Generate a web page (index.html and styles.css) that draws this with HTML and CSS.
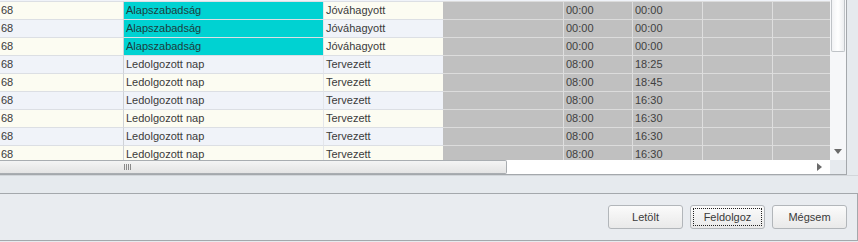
FILE: index.html
```html
<!DOCTYPE html>
<html lang="hu">
<head>
  <meta charset="UTF-8" />
  <title>Jelenlét feldolgozás</title>
  <link rel="stylesheet" href="styles.css">
</head>
<body>
  <div class="racs-doboz">
    <div class="racs-fo">
      <div class="sorok">
        <div class="sor paratlan">
          <div class="cella c1">68</div>
          <div class="cella c2 turkiz">Alapszabadság</div>
          <div class="cella c3">Jóváhagyott</div>
          <div class="cella c4 szurke"></div>
          <div class="cella c5 szurke">00:00</div>
          <div class="cella c6 szurke">00:00</div>
          <div class="cella c7 szurke"></div>
          <div class="cella c8 szurke"></div>
        </div>
        <div class="sor paros">
          <div class="cella c1">68</div>
          <div class="cella c2 turkiz">Alapszabadság</div>
          <div class="cella c3">Jóváhagyott</div>
          <div class="cella c4 szurke"></div>
          <div class="cella c5 szurke">00:00</div>
          <div class="cella c6 szurke">00:00</div>
          <div class="cella c7 szurke"></div>
          <div class="cella c8 szurke"></div>
        </div>
        <div class="sor paratlan">
          <div class="cella c1">68</div>
          <div class="cella c2 turkiz">Alapszabadság</div>
          <div class="cella c3">Jóváhagyott</div>
          <div class="cella c4 szurke"></div>
          <div class="cella c5 szurke">00:00</div>
          <div class="cella c6 szurke">00:00</div>
          <div class="cella c7 szurke"></div>
          <div class="cella c8 szurke"></div>
        </div>
        <div class="sor paros">
          <div class="cella c1">68</div>
          <div class="cella c2">Ledolgozott nap</div>
          <div class="cella c3">Tervezett</div>
          <div class="cella c4 szurke"></div>
          <div class="cella c5 szurke">08:00</div>
          <div class="cella c6 szurke">18:25</div>
          <div class="cella c7 szurke"></div>
          <div class="cella c8 szurke"></div>
        </div>
        <div class="sor paratlan">
          <div class="cella c1">68</div>
          <div class="cella c2">Ledolgozott nap</div>
          <div class="cella c3">Tervezett</div>
          <div class="cella c4 szurke"></div>
          <div class="cella c5 szurke">08:00</div>
          <div class="cella c6 szurke">18:45</div>
          <div class="cella c7 szurke"></div>
          <div class="cella c8 szurke"></div>
        </div>
        <div class="sor paros">
          <div class="cella c1">68</div>
          <div class="cella c2">Ledolgozott nap</div>
          <div class="cella c3">Tervezett</div>
          <div class="cella c4 szurke"></div>
          <div class="cella c5 szurke">08:00</div>
          <div class="cella c6 szurke">16:30</div>
          <div class="cella c7 szurke"></div>
          <div class="cella c8 szurke"></div>
        </div>
        <div class="sor paratlan">
          <div class="cella c1">68</div>
          <div class="cella c2">Ledolgozott nap</div>
          <div class="cella c3">Tervezett</div>
          <div class="cella c4 szurke"></div>
          <div class="cella c5 szurke">08:00</div>
          <div class="cella c6 szurke">16:30</div>
          <div class="cella c7 szurke"></div>
          <div class="cella c8 szurke"></div>
        </div>
        <div class="sor paros">
          <div class="cella c1">68</div>
          <div class="cella c2">Ledolgozott nap</div>
          <div class="cella c3">Tervezett</div>
          <div class="cella c4 szurke"></div>
          <div class="cella c5 szurke">08:00</div>
          <div class="cella c6 szurke">16:30</div>
          <div class="cella c7 szurke"></div>
          <div class="cella c8 szurke"></div>
        </div>
        <div class="sor paratlan">
          <div class="cella c1">68</div>
          <div class="cella c2">Ledolgozott nap</div>
          <div class="cella c3">Tervezett</div>
          <div class="cella c4 szurke"></div>
          <div class="cella c5 szurke">08:00</div>
          <div class="cella c6 szurke">16:30</div>
          <div class="cella c7 szurke"></div>
          <div class="cella c8 szurke"></div>
        </div>
      </div>

      <div class="vizszintes-gorgeto">
        <div class="csuszka-v">
          <span class="fogo"></span>
        </div>
        <div class="sav-v">
          <svg width="5" height="8" viewBox="0 0 5 8"><path d="M0 0 L5 4 L0 8 Z" fill="#6a6a6a"/></svg>
        </div>
      </div>
    </div>

    <div class="fuggoleges-gorgeto">
      <div class="sav-f">
        <div class="csuszka-f"></div>
        <svg class="nyil-le" width="8" height="5" viewBox="0 0 8 5"><path d="M0 0 L8 0 L4 5 Z" fill="#6a6a6a"/></svg>
      </div>
      <div class="sarok"></div>
    </div>
  </div>

  <div class="resz"></div>

  <div class="gomb-panel">
    <button class="gomb">Letölt</button>
    <button class="gomb aktiv"><span>Feldolgoz</span></button>
    <button class="gomb">Mégsem</button>
  </div>
</body>
</html>
```

FILE: styles.css
```css
body {
  font-family: "Liberation Sans", Arial, sans-serif;
  font-size: 11px;
  color: #3a3a3a;
  background-color: #e6eaee;
  margin: 0;
  padding: 0;
  width: 858px;
  height: 242px;
  overflow: hidden;
}

.racs-doboz {
  display: flex;
  width: 847px;
  height: 175px;
  box-sizing: border-box;
  border-right: 1px solid #a4a8ac;
  border-bottom: 1px solid #a4a8ac;
  background-color: #fff;
}

.racs-fo {
  width: 830px;
  display: flex;
  flex-direction: column;
}

.sorok {
  height: 160px;
  overflow: hidden;
  padding-top: 1px;
  box-sizing: border-box;
  background-color: #f0f3f9;
}

.sor {
  display: grid;
  grid-template-columns: 123px 200px 120px 120px 69px 70px 70px 58px;
  height: 18px;
}

.paratlan {
  background-color: #fcfcf2;
}

.paros {
  background-color: #f0f3f9;
}

.cella {
  box-sizing: border-box;
  height: 18px;
  line-height: 17px;
  border-top: 1px solid #dcdfe4;
  padding-left: 2px;
  white-space: nowrap;
  overflow: hidden;
}

.c1 {
  padding-left: 1px;
}

.c2 {
  border-left: 1px solid #cfd2d6;
}

.c3 {
  border-left: 1px solid #e4e6ea;
}

.turkiz {
  background-color: #00d2d2;
  color: #1d3d3d;
}

.szurke {
  background-color: #c0c0c0;
  border-top-color: #dcdcdc;
  border-left: 1px solid #dedede;
  color: #404040;
}

.c4 {
  border-left: none;
}

.vizszintes-gorgeto {
  display: flex;
  height: 14px;
  background-color: #fff;
}

.csuszka-v {
  width: 507px;
  box-sizing: border-box;
  border: 1px solid #a9adb1;
  border-left: none;
  border-radius: 0 2px 2px 0;
  background: linear-gradient(#f4f4f4, #e4e4e4);
  padding-left: 124px;
  padding-top: 3px;
}

.fogo {
  display: block;
  width: 7px;
  height: 6px;
  background: repeating-linear-gradient(90deg, #8a8a8a 0 1px, transparent 1px 2px);
}

.sav-v {
  flex: 1;
  display: flex;
  justify-content: flex-end;
  align-items: center;
  padding-right: 8px;
}

.fuggoleges-gorgeto {
  width: 16px;
  display: flex;
  flex-direction: column;
}

.sav-f {
  height: 160px;
  background-color: #f6f7f9;
  display: flex;
  flex-direction: column;
  align-items: center;
}

.csuszka-f {
  width: 14px;
  height: 52px;
  box-sizing: border-box;
  border: 1px solid #bfc3c7;
  border-top: none;
  border-radius: 0 0 2px 2px;
  background: linear-gradient(90deg, #f2f3f5, #ffffff 50%, #eceef0);
}

.nyil-le {
  margin-top: auto;
  margin-bottom: 6px;
}

.sarok {
  flex: 1;
  background-color: #e6eaee;
}

.resz {
  height: 18px;
  border-top: 1px solid #d2d6da;
  box-sizing: border-box;
}

.gomb-panel {
  display: flex;
  justify-content: flex-end;
  align-items: center;
  gap: 7px;
  width: 858px;
  height: 48px;
  box-sizing: border-box;
  border-top: 1px solid #a4a8ac;
  border-bottom: 1px solid #a4a8ac;
  border-right: 1px solid #a4a8ac;
  padding-right: 10px;
  background-color: #e9ecf0;
}

.gomb {
  width: 75px;
  height: 24px;
  font-family: "Liberation Sans", Arial, sans-serif;
  font-size: 11px;
  color: #3a3a3a;
  border: 1px solid #b2b6ba;
  border-radius: 3px;
  background: linear-gradient(#fbfbfb, #e9e9e9);
  padding: 0;
  cursor: pointer;
}

.gomb.aktiv {
  padding: 2px;
}

.gomb.aktiv span {
  display: flex;
  align-items: center;
  justify-content: center;
  height: 100%;
  box-sizing: border-box;
  border: 1px dotted #222;
}
```
